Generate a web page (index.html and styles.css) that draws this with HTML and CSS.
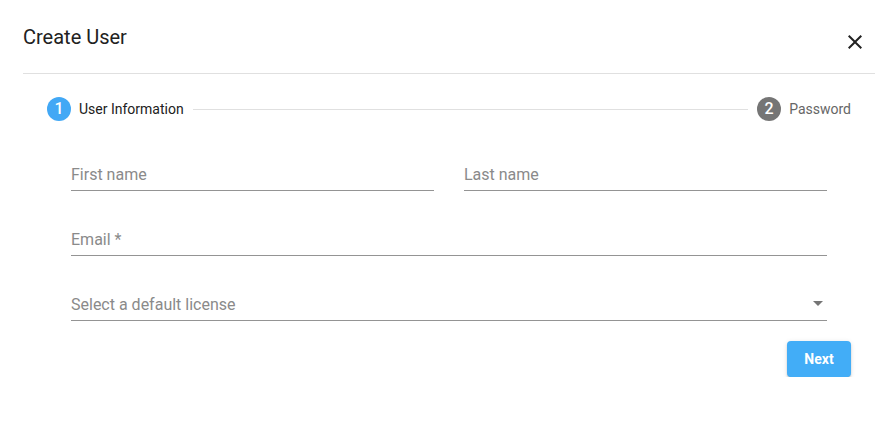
FILE: index.html
```html
<!DOCTYPE html>
<html lang="en">
<head>
<meta charset="utf-8">
<title>Create User</title>
<link rel="stylesheet" href="styles.css">
</head>
<body>
<div class="dialog">
  <div class="dialog-header">
    <h2 class="dialog-title">Create User</h2>
    <button class="close-btn" aria-label="Close">
      <svg viewBox="0 0 24 24" width="24" height="24"><path d="M19 6.41L17.59 5 12 10.59 6.41 5 5 6.41 10.59 12 5 17.59 6.41 19 12 13.41 17.59 19 19 17.59 13.41 12z"/></svg>
    </button>
  </div>
  <div class="dialog-content">
    <div class="stepper">
      <div class="step">
        <span class="step-icon active">1</span>
        <span class="step-label active">User Information</span>
      </div>
      <div class="step-line"></div>
      <div class="step">
        <span class="step-icon">2</span>
        <span class="step-label">Password</span>
      </div>
    </div>
    <div class="form">
      <div class="field">First name</div>
      <div class="field">Last name</div>
      <div class="field wide">Email *</div>
      <div class="field wide select"><span>Select a default license</span><span class="arrow"></span></div>
    </div>
    <div class="actions">
      <button class="btn-next">Next</button>
    </div>
  </div>
</div>
</body>
</html>
```

FILE: styles.css
```css
* { box-sizing: border-box; }
html, body {
  margin: 0;
  padding: 0;
  background: #fff;
  font-family: Roboto, "Liberation Sans", Arial, sans-serif;
}
.dialog {
  padding: 0 18px 0 23px;
}
.dialog-header {
  display: flex;
  justify-content: space-between;
  align-items: flex-start;
  height: 74px;
  padding-top: 23px;
  border-bottom: 1px solid #e0e0e0;
}
.dialog-title {
  margin: 0;
  font-size: 20px;
  line-height: 28px;
  font-weight: 400;
  color: #212121;
}
.close-btn {
  margin: 7px 8px 0 0;
  padding: 0;
  border: 0;
  background: none;
  width: 24px;
  height: 24px;
  display: block;
}
.close-btn svg {
  display: block;
  fill: #222;
}
.dialog-content {
  padding: 0 24px;
}
.stepper {
  display: flex;
  align-items: center;
  padding-top: 23px;
}
.step {
  display: flex;
  align-items: center;
}
.step-icon {
  width: 24px;
  height: 24px;
  border-radius: 50%;
  background: #757575;
  color: #fff;
  font-size: 16px;
  font-weight: 500;
  line-height: 24px;
  text-align: center;
  margin-right: 8px;
}
.step-icon.active {
  background: #42a8f5;
}
.step-label {
  font-size: 14px;
  line-height: 20px;
  color: #666;
}
.step-label.active {
  color: #212121;
}
.step-line {
  flex: 1;
  height: 1px;
  background: #e0e0e0;
  margin: 0 9px;
}
.form {
  display: grid;
  grid-template-columns: 1fr 1fr;
  column-gap: 30px;
  row-gap: 39px;
  margin-top: 44px;
  padding: 0 24px;
}
.field {
  font-size: 16px;
  line-height: 20px;
  height: 26px;
  padding-bottom: 5px;
  color: #8a8a8a;
  border-bottom: 1px solid #949494;
}
.field.wide {
  grid-column: 1 / span 2;
}
.field.select {
  display: flex;
  justify-content: space-between;
  align-items: center;
}
.arrow {
  width: 0;
  height: 0;
  border-left: 5px solid transparent;
  border-right: 5px solid transparent;
  border-top: 5px solid #757575;
  margin: 0 4px 3px 0;
}
.actions {
  display: flex;
  justify-content: flex-end;
  margin-top: 20px;
}
.btn-next {
  width: 64px;
  height: 36px;
  border: 0;
  border-radius: 4px;
  background: #42adf7;
  color: #fff;
  font-family: Roboto, "Liberation Sans", Arial, sans-serif;
  font-size: 14px;
  font-weight: 700;
  box-shadow: 0 3px 1px -2px rgba(0,0,0,.2), 0 2px 2px 0 rgba(0,0,0,.14), 0 1px 5px 0 rgba(0,0,0,.12);
}
```
